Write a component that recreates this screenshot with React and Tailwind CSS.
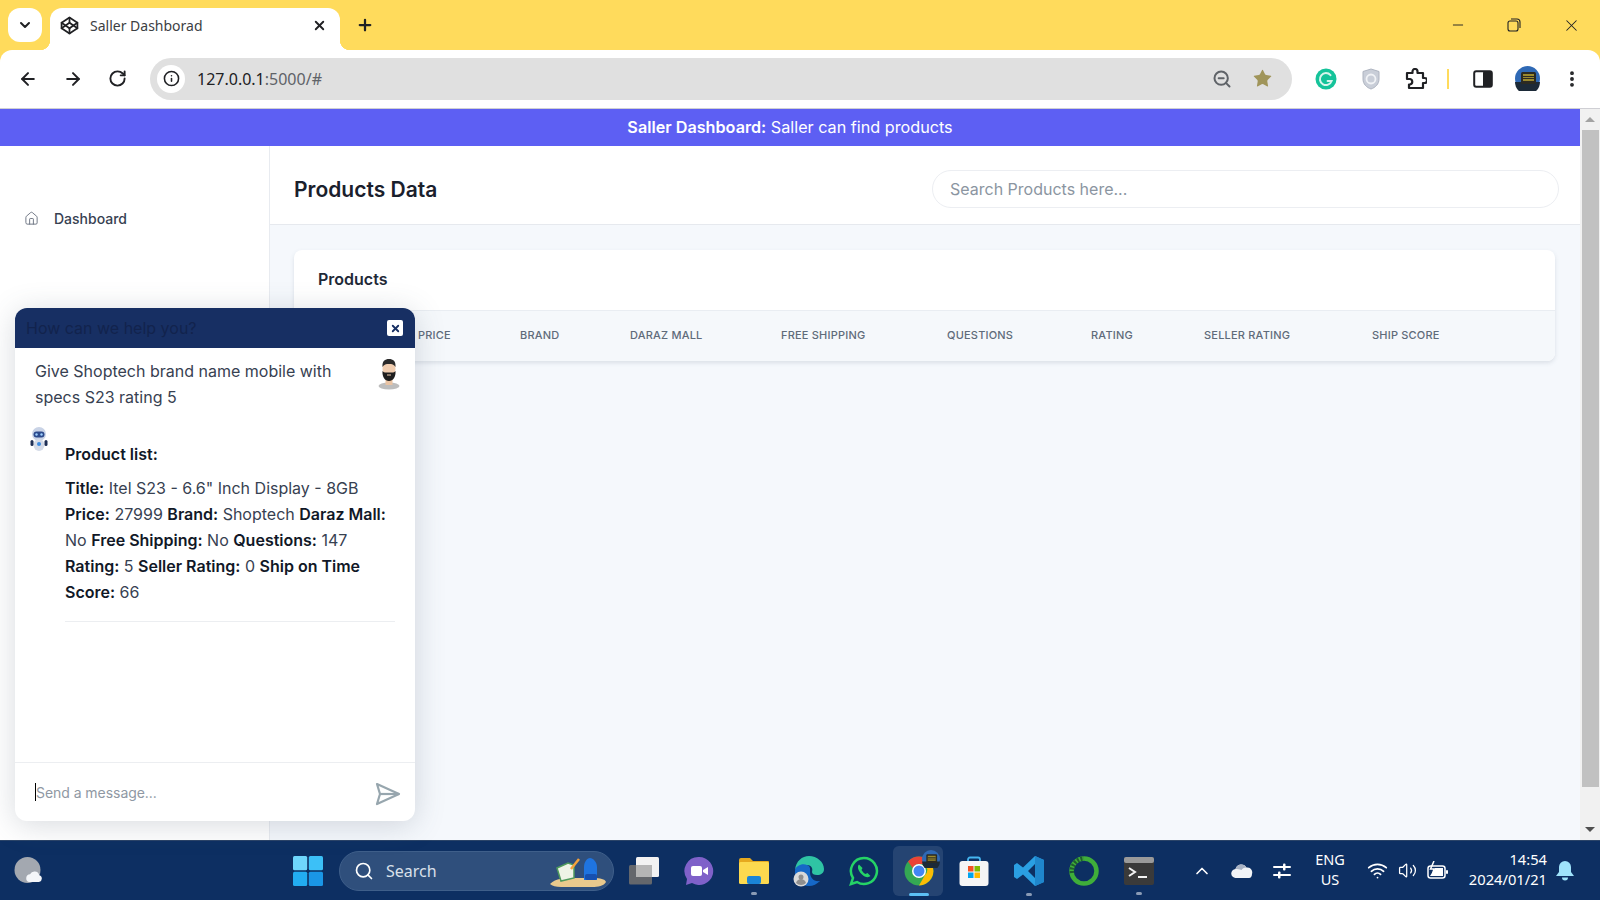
import {
  ArrowLeft,
  ArrowRight,
  ChevronDown,
  ChevronUp,
  Codepen,
  EllipsisVertical,
  House,
  Info,
  Minus,
  Plus,
  RotateCw,
  Search,
  Star,
  Volume2,
  Wifi,
  X,
  ZoomOut,
} from "lucide-react";

const columns = [
  { label: "Price", width: "w-[102px]" },
  { label: "Brand", width: "w-[110px]" },
  { label: "Daraz Mall", width: "w-[151px]" },
  { label: "Free Shipping", width: "w-[166px]" },
  { label: "Questions", width: "w-[144px]" },
  { label: "Rating", width: "w-[113px]" },
  { label: "Seller Rating", width: "w-[168px]" },
  { label: "Ship Score", width: "w-[100px]" },
];

function PuzzleIcon() {
  return (
    <svg width="22" height="22" viewBox="0 0 22 22" fill="none" stroke="#202124" strokeWidth="2.2" strokeLinejoin="round">
      <path d="M2 5h5.5V3.5a2.5 2.5 0 0 1 5 0V5H18v5h1.5a2.5 2.5 0 0 1 0 5H18v5H4v-3.5h1a2.8 2.8 0 0 0 0-5.5H2z" />
    </svg>
  );
}

function SidePanelIcon() {
  return (
    <svg width="20" height="20" viewBox="0 0 20 20">
      <rect x="1.2" y="2.2" width="17.6" height="15.6" rx="2" fill="#fff" stroke="#202124" strokeWidth="2" />
      <rect x="10" y="2" width="9" height="16" rx="1.5" fill="#202124" />
    </svg>
  );
}

function GrammarlyIcon() {
  return (
    <svg width="22" height="22" viewBox="0 0 22 22">
      <circle cx="11" cy="11" r="10.5" fill="#15c39a" />
      <path d="M15.5 7.2A6 6 0 1 0 16.6 13h-4" fill="none" stroke="#d8f5ec" strokeWidth="2" strokeLinecap="round" />
    </svg>
  );
}

function ShieldIcon() {
  return (
    <svg width="18" height="22" viewBox="0 0 18 22">
      <path d="M9 1l8 2.5V11c0 5-3.5 8.5-8 10-4.500-1.500-8-5-8-10V3.500z" fill="#c9ced8" stroke="#aeb4c0" />
      <circle cx="9" cy="11" r="4.500" fill="none" stroke="#f1f3f6" strokeWidth="1.800" />
    </svg>
  );
}

function ProfileIcon({ size = 25 }) {
  return (
    <svg width={size} height={size} viewBox="0 0 25 25">
      <circle cx="12.500" cy="12.500" r="12.500" fill="#2f69b5" />
      <path d="M0 16h25a12.500 12.500 0 0 1-25 0z" fill="#1c2a38" />
      <rect x="6" y="6" width="15" height="12" rx="1.500" fill="#2b2a22" />
      <rect x="8" y="8" width="11" height="7" fill="#9b8a2e" />
      <path d="M8 10.500h11M8 12.500h11" stroke="#2b2a22" />
    </svg>
  );
}

function UserAvatar() {
  return (
    <svg width="24" height="32" viewBox="0 0 24 32">
      <ellipse cx="12" cy="28" rx="10.500" ry="3.500" fill="#bdbdbd" />
      <rect x="8.500" y="18" width="7" height="9" fill="#e9c3a3" />
      <ellipse cx="12" cy="11" rx="6.500" ry="8.500" fill="#f0cdb0" />
      <path d="M5.500 9C5 3 8 1 12 1s7 2 6.500 8C17 6.500 15 6 12 6S7 6.500 5.500 9z" fill="#2a2a2a" />
      <path d="M5.500 13c1 1.500 2 1.500 3.500 1.500h6c1.500 0 2.500 0 3.500-1.500.5 6-2.500 10-6.500 10S5 19 5.500 13z" fill="#1e1e1e" />
      <path d="M10 17h4" stroke="#f0cdb0" strokeWidth="1" />
    </svg>
  );
}

function RobotAvatar() {
  return (
    <svg width="20" height="26" viewBox="0 0 20 26">
      <circle cx="10" cy="8" r="7" fill="#c9d3e6" />
      <rect x="4.500" y="5.500" width="11" height="6" rx="3" fill="#2c4a8c" />
      <circle cx="7.500" cy="8.500" r="1.200" fill="#9fd0ff" />
      <circle cx="12.500" cy="8.500" r="1.200" fill="#9fd0ff" />
      <ellipse cx="10" cy="19" rx="5.500" ry="6" fill="#d5dbe8" />
      <circle cx="10" cy="18" r="2" fill="#3d8be0" />
      <rect x="1.500" y="14" width="3" height="6" rx="1.500" fill="#1f2f55" />
      <rect x="15.500" y="14" width="3" height="6" rx="1.500" fill="#1f2f55" />
    </svg>
  );
}

function SendIcon() {
  return (
    <svg width="26" height="24" viewBox="0 0 26 24" fill="none" stroke="#97a6ae" strokeWidth="2.200" strokeLinejoin="round">
      <path d="M2 2l22 10L2 22l3-10z" />
      <path d="M5 12h19" />
    </svg>
  );
}

function WeatherIcon() {
  return (
    <svg width="30" height="30" viewBox="0 0 30 30">
      <circle cx="13.500" cy="14" r="13" fill="#a3a8b0" />
      <path d="M15 26a4 4 0 0 1 1-7.800 5 5 0 0 1 9.300 1A3.500 3.500 0 0 1 25 26z" fill="#f4f6f9" />
    </svg>
  );
}

function StartIcon() {
  return (
    <svg width="30" height="30" viewBox="0 0 30 30">
      <rect x="0" y="0" width="14.200" height="14.200" rx="1.500" fill="#6fd6fb" />
      <rect x="15.800" y="0" width="14.200" height="14.200" rx="1.500" fill="#3cc0f7" />
      <rect x="0" y="15.800" width="14.200" height="14.200" rx="1.500" fill="#22adf2" />
      <rect x="15.800" y="15.800" width="14.200" height="14.200" rx="1.500" fill="#1a96e6" />
    </svg>
  );
}

function SearchArt() {
  return (
    <svg width="58" height="34" viewBox="0 0 58 34">
      <path d="M1 30c6-6 14-6 24-6h20c6 0 11 1 12 4-2 4-8 5-14 5H12C7 33 3 32 1 30z" fill="#e9c98d" />
      <path d="M8 14l11-5 6 2v13l-13 3z" fill="#eef3e6" stroke="#4f9a5c" strokeWidth="1.500" />
      <path d="M22 15l8-10" stroke="#f4a13b" strokeWidth="2.500" />
      <path d="M35 26V13c0-5 3-9 6-9s7 4 7 9v13z" fill="#1f74e0" />
      <rect x="36" y="20" width="12" height="6" rx="2" fill="#1650b0" />
    </svg>
  );
}

function TaskViewIcon() {
  return (
    <svg width="30" height="28" viewBox="0 0 30 28">
      <rect x="7" y="0" width="23" height="20" rx="1.500" fill="#f2f2f2" />
      <rect x="0" y="8" width="23" height="19.500" rx="1.500" fill="#6e6e6e" fillOpacity="0.900" />
      <rect x="7" y="8" width="16" height="12" fill="#b5b5b5" />
    </svg>
  );
}

function MeetIcon() {
  return (
    <svg width="30" height="30" viewBox="0 0 30 30">
      <path d="M15 1a14 14 0 1 1-7 26l-6 2 1-6A14 14 0 0 1 15 1z" fill="#7f61c9" />
      <rect x="7" y="10" width="11" height="10" rx="2" fill="#fff" />
      <path d="M19 14l5-3v8l-5-3z" fill="#fff" />
    </svg>
  );
}

function FolderIcon() {
  return (
    <svg width="32" height="28" viewBox="0 0 32 28">
      <path d="M1 3a2 2 0 0 1 2-2h9l3 3h15a1 1 0 0 1 1 1v3H1z" fill="#e6a91f" />
      <rect x="1" y="5" width="30" height="22" rx="1.500" fill="#fcd94f" />
      <rect x="9" y="19" width="14" height="8" rx="2" fill="#1a84d6" />
    </svg>
  );
}

function EdgeIcon() {
  return (
    <svg width="32" height="32" viewBox="0 0 32 32">
      <path d="M2 15C3 6 9 1 16 1c8 0 15 6 15 13 0 4-3 6-7 6-3 0-5-1-5-3 1-3 0-7-5-7-6 0-11 2-12 5z" fill="#2fc4a4" />
      <path d="M2 15c1-4 7-7 12-5 4 1 3 5 3 7 0 6 4 10 10 9-3 3-7 5-11 5C7 31 1 24 2 15z" fill="#1668c7" />
      <circle cx="8" cy="24" r="7.500" fill="#d9d9d9" />
      <circle cx="8" cy="22" r="2.500" fill="#8e8e8e" />
      <path d="M3 28c1-3 3-4 5-4s4 1 5 4a7 7 0 0 1-10 0z" fill="#8e8e8e" />
    </svg>
  );
}

function WhatsAppIcon() {
  return (
    <svg width="30" height="30" viewBox="0 0 30 30" fill="none">
      <path d="M15 2a13 13 0 0 0-11 20l-2 6 6-2A13 13 0 1 0 15 2z" stroke="#25d366" strokeWidth="2.500" />
      <path d="M10 8.500c-2 2-1 6 2.500 9.500s7 4 9 2l-3-3-2 1c-2-1-3-2.500-4-4l1-2z" fill="#25d366" />
    </svg>
  );
}

function ChromeIcon() {
  return (
    <svg width="30" height="30" viewBox="0 0 30 30">
      <circle cx="15" cy="15" r="14.500" fill="#34a853" />
      <path d="M15 .5A14.500 14.500 0 0 1 27.600 8H15a7 7 0 0 0-6.300 4L4 5.500A14.500 14.500 0 0 1 15 .5z" fill="#ea4335" />
      <path d="M27.600 8A14.500 14.500 0 0 1 15 29.500l6-10.500a7 7 0 0 0-.8-11z" fill="#fbbc05" />
      <circle cx="15" cy="15" r="7" fill="#fff" />
      <circle cx="15" cy="15" r="5.500" fill="#4285f4" />
    </svg>
  );
}

function StoreIcon() {
  return (
    <svg width="30" height="30" viewBox="0 0 30 30">
      <path d="M9 7V3.500A2 2 0 0 1 11 1.500h8A2 2 0 0 1 21 3.500V7" fill="none" stroke="#45b6f0" strokeWidth="1.800" />
      <rect x="0.500" y="5" width="29" height="25" rx="3" fill="#f5f5f5" />
      <rect x="9" y="10" width="5.500" height="5.500" fill="#f25022" />
      <rect x="15.500" y="10" width="5.500" height="5.500" fill="#7fba00" />
      <rect x="9" y="16.500" width="5.500" height="5.500" fill="#00a4ef" />
      <rect x="15.500" y="16.500" width="5.500" height="5.500" fill="#ffb900" />
    </svg>
  );
}

function VsCodeIcon() {
  return (
    <svg width="30" height="30" viewBox="0 0 30 30">
      <path d="M21 0l9 4v22l-9 4-12-11.500L3 23l-3-2v-12l3-2 6 4.500zM21 8l-7 7 7 7z" fill="#2a9fe3" />
      <path d="M21 0l9 4v22l-9 4z" fill="#1f86cc" />
    </svg>
  );
}

function RingIcon() {
  return (
    <svg width="30" height="30" viewBox="0 0 30 30" fill="none">
      <circle cx="15" cy="15" r="12.500" stroke="#3fae3a" strokeWidth="4.500" />
      <path d="M3 17A12.500 12.500 0 0 1 15 2.500" stroke="#1f5c2e" strokeWidth="4.500" strokeDasharray="2 1.500" />
    </svg>
  );
}

function TerminalIcon() {
  return (
    <svg width="30" height="28" viewBox="0 0 30 28">
      <rect x="0" y="0" width="30" height="28" rx="2" fill="#3a3a3a" />
      <rect x="0" y="0" width="30" height="6" rx="2" fill="#9a9a9a" />
      <path d="M5 11l6 4-6 4" fill="none" stroke="#f2f2f2" strokeWidth="2" />
      <path d="M14 20h9" stroke="#f2f2f2" strokeWidth="2" />
    </svg>
  );
}

function SlidersIcon() {
  return (
    <svg width="18" height="16" viewBox="0 0 18 16" fill="#fff">
      <rect x="0" y="3" width="18" height="2" rx="1" />
      <rect x="10" y="0.500" width="2.500" height="7" rx="1" />
      <rect x="0" y="11" width="18" height="2" rx="1" />
      <rect x="5" y="8.500" width="2.500" height="7" rx="1" />
    </svg>
  );
}

function CloudIcon() {
  return (
    <svg width="22" height="14" viewBox="0 0 22 14">
      <path d="M5 14a4.500 4.500 0 0 1-.5-9 6 6 0 0 1 11-1.500A5 5 0 0 1 21 10c0 2-1 4-3 4z" fill="#f2f4f7" />
      <path d="M4.500 5a6 6 0 0 1 11-1.500c-3 0-4 1-5 2.500-2-1-4-1-6-1z" fill="#a9b3c4" />
    </svg>
  );
}

function BatteryIcon() {
  return (
    <svg width="22" height="20" viewBox="0 0 22 20" fill="none">
      <rect x="1" y="5" width="17" height="12" rx="2.500" stroke="#fff" strokeWidth="1.500" />
      <rect x="19" y="9" width="2" height="4" rx="1" fill="#fff" />
      <path d="M3 15l5-8h8v8z" fill="#fff" />
      <path d="M7 0L3.500 8H7l-1.500 5" stroke="#fff" strokeWidth="1.500" />
    </svg>
  );
}

function BellIcon() {
  return (
    <svg width="18" height="20" viewBox="0 0 18 20">
      <path d="M9 0a6 6 0 0 1 6 6v5l3 4H0l3-4V6a6 6 0 0 1 6-6z" fill="#9fe3fb" />
      <path d="M6 16.500h6a3 3 0 0 1-6 0z" fill="#9fe3fb" />
    </svg>
  );
}

function TaskItem({ children, active }) {
  return (
    <div className="relative flex h-[50px] w-[55px] items-center justify-center">
      {active && <div className="absolute inset-y-0 left-[2px] right-[3px] rounded-md bg-white/10" />}
      <div className="relative">{children}</div>
    </div>
  );
}

function Indicator({ active }) {
  return (
    <div
      className={
        active
          ? "absolute -bottom-[10px] left-1/2 h-[3px] w-5 -translate-x-1/2 rounded-full bg-[#5cc0f5]"
          : "absolute -bottom-[10px] left-1/2 h-[3px] w-[6px] -translate-x-1/2 rounded-full bg-[#8a9bb5]"
      }
    />
  );
}

function BrowserChrome() {
  return (
    <div className="shrink-0 bg-[#ffdb5c] font-['Noto_Sans',sans-serif]">
      <div className="flex h-[50px] items-start pt-2 pl-2">
        <div className="flex h-[34px] w-[34px] items-center justify-center rounded-xl bg-white">
          <ChevronDown size={16} strokeWidth={3} className="text-[#202124]" />
        </div>
        <div className="relative ml-2 flex h-[42px] w-[290px] items-center rounded-t-xl bg-white pb-[8px] pl-[10px] pr-[13px]">
          <span className="absolute bottom-0 -left-[10px] h-[10px] w-[10px] bg-[radial-gradient(circle_at_0_0,#ffdb5c_10px,#ffffff_10.5px)]" />
          <span className="absolute bottom-0 -right-[10px] h-[10px] w-[10px] bg-[radial-gradient(circle_at_100%_0,#ffdb5c_10px,#ffffff_10.5px)]" />
          <Codepen size={19} strokeWidth={2.2} className="text-[#202124]" />
          <span className="ml-[11px] text-[14px] text-[#3c4043]">Saller Dashborad</span>
          <X size={15} strokeWidth={3} className="ml-auto text-[#202124]" />
        </div>
        <Plus size={18} strokeWidth={3} className="ml-[16px] mt-[8px] text-[#202124]" />
        <div className="ml-auto flex h-[34px] items-center pr-[19px]">
          <Minus size={16} strokeWidth={1.4} className="text-[#202124]" />
          <svg width="14" height="14" viewBox="0 0 14 14" fill="none" stroke="#202124" strokeWidth="1.100" className="ml-[41px]">
            <rect x="1" y="3" width="10" height="10" rx="2" />
            <path d="M4 1h6a3 3 0 0 1 3 3v6" />
          </svg>
          <X size={19} strokeWidth={1.3} className="ml-[41px] text-[#202124]" />
        </div>
      </div>
      <div className="flex h-[59px] items-center rounded-t-xl border-b border-[#cfcfd4] bg-white pr-[18px] pb-[1px]">
        <div className="flex w-[150px] items-center gap-[25px] pl-[18px]">
          <ArrowLeft size={20} strokeWidth={2.4} className="text-[#202124]" />
          <ArrowRight size={20} strokeWidth={2.4} className="text-[#202124]" />
          <RotateCw size={19} strokeWidth={2.4} className="text-[#202124]" />
        </div>
        <div className="flex h-[42px] w-[1142px] items-center rounded-full bg-[#e0e0e0] pl-[7px] pr-[19px]">
          <div className="flex h-[28px] w-[28px] items-center justify-center rounded-full bg-white">
            <Info size={17} strokeWidth={2.2} className="text-[#202124]" />
          </div>
          <span className="ml-[12px] text-[16px] text-[#202124]">
            127.0.0.1<span className="text-[#5f6368]">:5000/#</span>
          </span>
          <ZoomOut size={20} strokeWidth={2.4} className="ml-auto text-[#5f6368]" />
          <Star size={21} fill="#a0955a" strokeWidth={0} className="ml-[20px]" />
        </div>
        <div className="ml-[23px] flex flex-1 items-center">
          <GrammarlyIcon />
          <div className="ml-[25px]"><ShieldIcon /></div>
          <div className="ml-[25px]"><PuzzleIcon /></div>
          <div className="ml-[20px] h-[20px] w-[2px] bg-[#ffdb5c]" />
          <div className="ml-[24px]"><SidePanelIcon /></div>
          <div className="ml-[22px]"><ProfileIcon /></div>
          <EllipsisVertical size={20} strokeWidth={2.6} className="ml-auto text-[#202124]" />
        </div>
      </div>
    </div>
  );
}

function Sidebar() {
  return (
    <aside className="w-[270px] shrink-0 border-r border-[#e8ebf0] bg-white pt-[62px]">
      <div className="flex items-center pl-[24px]">
        <House size={15} strokeWidth={1.5} className="text-[#6b7280]" />
        <span className="ml-[15px] text-[14px] font-medium text-[#374151]">Dashboard</span>
      </div>
    </aside>
  );
}

function MainPanel() {
  return (
    <main className="flex min-w-0 flex-1 flex-col bg-[#f5f8fc]">
      <header className="flex h-[79px] shrink-0 items-center justify-between border-b border-[#e6e9ee] bg-white pt-[8px] pl-6 pr-[21px]">
        <h1 className="pt-[1px] text-[21px] font-semibold text-[#1a202c]">Products Data</h1>
        <div className="flex h-[38px] w-[627px] items-center rounded-full border border-[#eceef2] bg-white pl-[17px] text-[16px] text-[#8b95a1]">
          Search Products here...
        </div>
      </header>
      <div className="pl-6 pr-[25px] pt-[25px]">
        <section className="rounded-lg bg-white shadow-[0_2px_4px_rgba(100,116,139,0.18)]">
          <h2 className="flex h-[60px] items-center pb-[2px] pl-[24px] text-[16px] font-semibold text-[#1f2937]">Products</h2>
          <div className="flex h-[51px] items-center rounded-b-lg border-t border-[#e9edf2] bg-[#f5f8fb] pb-[2px] pl-[124px] text-[11px] font-medium uppercase tracking-[0.2px] text-[#5f6b7a]">
            {columns.map((col) => (
              <div key={col.label} className={`${col.width} shrink-0`}>
                {col.label}
              </div>
            ))}
          </div>
        </section>
      </div>
    </main>
  );
}

function ChatBox() {
  return (
    <div className="absolute left-[15px] top-[308px] flex h-[513px] w-[400px] flex-col rounded-xl bg-white shadow-[0_4px_30px_rgba(71,85,105,0.22)]">
      <div className="flex h-[40px] shrink-0 items-center justify-between rounded-t-xl bg-[#172f63] pl-[11px] pr-[12px]">
        <span className="text-[16px] text-[#12234d]">How can we help you?</span>
        <button className="flex h-4 w-4 items-center justify-center rounded-[2px] bg-white">
          <X size={11} strokeWidth={4} className="text-[#172f63]" />
        </button>
      </div>
      <div className="flex-1 px-5 text-[16px] leading-[26px] text-[#374151]">
        <div className="flex items-start justify-between pt-[10px]">
          <p className="w-[320px]">Give Shoptech brand name mobile with specs S23 rating 5</p>
          <div className="mr-[-6px]"><UserAvatar /></div>
        </div>
        <div className="flex pt-[16px]">
          <div className="ml-[-6px] w-[36px] shrink-0"><RobotAvatar /></div>
          <div className="flex-1 pt-[15px]">
            <p className="font-semibold text-[#111827]">Product list:</p>
            <p className="mt-[8px] border-b border-[#eceef1] pb-[16px]">
              <b className="font-semibold text-[#111827]">Title:</b> Itel S23 - 6.6" Inch Display - 8GB{" "}
              <b className="font-semibold text-[#111827]">Price:</b> 27999{" "}
              <b className="font-semibold text-[#111827]">Brand:</b> Shoptech{" "}
              <b className="font-semibold text-[#111827]">Daraz Mall:</b> No{" "}
              <b className="font-semibold text-[#111827]">Free Shipping:</b> No{" "}
              <b className="font-semibold text-[#111827]">Questions:</b> 147{" "}
              <b className="font-semibold text-[#111827]">Rating:</b> 5{" "}
              <b className="font-semibold text-[#111827]">Seller Rating:</b> 0{" "}
              <b className="font-semibold text-[#111827]">Ship on Time Score:</b> 66
            </p>
          </div>
        </div>
      </div>
      <div className="flex h-[59px] shrink-0 items-center border-t border-[#eceef1] pl-5 pr-[14px]">
        <div className="h-[18px] w-[1px] bg-black" />
        <span className="text-[14px] tracking-[-0.05px] text-[#8f98a3]">Send a message...</span>
        <div className="ml-auto mt-[3px]"><SendIcon /></div>
      </div>
    </div>
  );
}

function Scrollbar() {
  return (
    <div className="flex w-5 shrink-0 flex-col items-center bg-[#f1f1f1]">
      <div className="mt-[8px] h-0 w-0 border-x-[5px] border-b-[5px] border-x-transparent border-b-[#a3a3a3]" />
      <div className="mt-[8px] h-[657px] w-[17px] bg-[#c1c1c1]" />
      <div className="mt-auto mb-[8px] h-0 w-0 border-x-[5px] border-t-[5px] border-x-transparent border-t-[#505050]" />
    </div>
  );
}

function Taskbar() {
  return (
    <div className="flex h-[60px] shrink-0 items-center border-t border-[#2b4468] bg-[#0d2f62] font-['Noto_Sans',sans-serif] text-white">
      <div className="ml-[14px] w-[266px]"><WeatherIcon /></div>
      <TaskItem><StartIcon /></TaskItem>
      <div className="ml-[4px] flex h-[40px] w-[275px] items-center rounded-full border border-[#3f5f8a] bg-[#2f4f7c] pl-[14px] pr-[6px]">
        <Search size={20} strokeWidth={2} className="text-white" />
        <span className="ml-[12px] text-[16px] text-[#d9e0ea]">Search</span>
        <div className="ml-auto"><SearchArt /></div>
      </div>
      <div className="ml-[2px] flex">
        <TaskItem><TaskViewIcon /></TaskItem>
        <TaskItem><MeetIcon /></TaskItem>
        <TaskItem><FolderIcon /><Indicator /></TaskItem>
        <TaskItem><EdgeIcon /></TaskItem>
        <TaskItem><WhatsAppIcon /></TaskItem>
        <TaskItem active>
          <div className="relative">
            <ChromeIcon />
            <div className="absolute -right-[6px] -top-[6px]"><ProfileIcon size={18} /></div>
          </div>
          <Indicator active />
        </TaskItem>
        <TaskItem><StoreIcon /></TaskItem>
        <TaskItem><VsCodeIcon /><Indicator /></TaskItem>
        <TaskItem><RingIcon /></TaskItem>
        <TaskItem><TerminalIcon /><Indicator /></TaskItem>
      </div>
      <div className="ml-[26px] flex items-center">
        <ChevronUp size={20} strokeWidth={2} />
        <div className="ml-[19px]"><CloudIcon /></div>
        <div className="ml-[20px]"><SlidersIcon /></div>
        <div className="ml-[11px] w-[56px] pb-[3px] text-center text-[14.5px] leading-[20px]">
          <div>ENG</div>
          <div>US</div>
        </div>
        <Wifi size={21} strokeWidth={2} className="ml-[9px]" />
        <Volume2 size={19} strokeWidth={1.6} className="ml-[10px]" />
        <div className="ml-[10px]"><BatteryIcon /></div>
        <div className="ml-[6px] w-[92px] pb-[3px] text-right text-[14.7px] leading-[20px]">
          <div>14:54</div>
          <div>2024/01/21</div>
        </div>
        <div className="ml-[9px]"><BellIcon /></div>
      </div>
    </div>
  );
}

export default function App() {
  return (
    <div className="relative flex h-[900px] w-[1600px] flex-col overflow-hidden bg-white font-['Inter',sans-serif]">
      <BrowserChrome />
      <div className="flex min-h-0 flex-1">
        <div className="flex min-w-0 flex-1 flex-col">
          <div className="flex h-[37px] shrink-0 items-center justify-center bg-[#5d5ff3] text-[16.2px] text-white">
            <b className="font-semibold">Saller Dashboard:</b>&nbsp;Saller can find products
          </div>
          <div className="flex min-h-0 flex-1">
            <Sidebar />
            <MainPanel />
          </div>
        </div>
        <Scrollbar />
      </div>
      <Taskbar />
      <ChatBox />
    </div>
  );
}
